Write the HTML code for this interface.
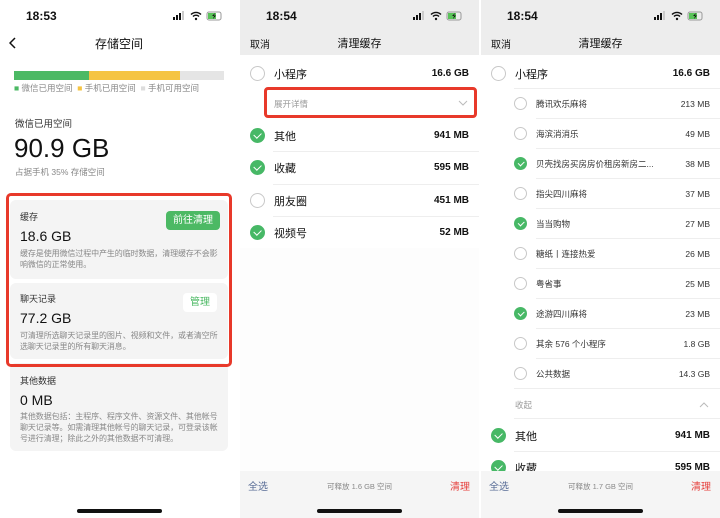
<!DOCTYPE html>
<html><head><meta charset="utf-8"><style>
*{margin:0;padding:0;box-sizing:border-box}
body{width:720px;height:518px;overflow:hidden;background:#fff;font-family:"Liberation Sans","Noto Sans CJK SC",sans-serif;position:relative;color:#111}
.p{position:absolute;top:0;height:518px;overflow:hidden}
.a{position:absolute;white-space:nowrap}
.time{font-size:12px;font-weight:bold;top:9px}
.card{position:absolute;left:10px;width:218px;background:#f4f4f4;border-radius:6px}
.g{color:#888}
.d{font-size:8px;line-height:11px;white-space:normal;width:204px;letter-spacing:-0.1px}
.c{position:absolute;border-radius:50%;border:1px solid #c8c8c8;background:#fff}
.ck{position:absolute;border-radius:50%;background:#47b866}
.ck:after{content:"";position:absolute;left:35%;top:22%;width:25%;height:42%;border:solid #fff;border-width:0 1.5px 1.5px 0;transform:rotate(45deg)}
.ln{position:absolute;height:1px;background:#eee}
.hb{position:absolute;width:85px;height:4px;border-radius:2px;background:#111;top:509px}
.v{font-size:10px;font-weight:bold;right:10px}
.s{font-size:8.5px;color:#333;right:10px}
</style></head><body>

<div class="p" style="left:0;width:238px;background:#fff">
<div class="a time" style="left:26px">18:53</div>
<svg class="a" style="left:173px;top:11px" width="52" height="10"><rect x="0" y="6" width="2" height="3" fill="#111"/><rect x="3" y="4" width="2" height="5" fill="#111"/><rect x="6" y="2" width="2" height="7" fill="#111"/><rect x="9" y="0" width="2" height="9" fill="#ccc"/><path d="M18 3.5a7 7 0 0 1 10 0M20 5.5a4 4 0 0 1 6 0" stroke="#111" stroke-width="1.4" fill="none"/><circle cx="23" cy="8" r="1.2" fill="#111"/><rect x="34" y="1" width="14" height="8" rx="2" fill="none" stroke="#999"/><rect x="35" y="2" width="8" height="6" fill="#5ac35a"/><path d="M42 2l-3 3h2l-1 3 3-3.5h-2z" fill="#111"/></svg>
<svg class="a" style="left:9px;top:37px" width="8" height="12"><path d="M6 1L1 6l5 5" stroke="#111" stroke-width="1.5" fill="none"/></svg>
<div class="a" style="left:0;width:238px;text-align:center;top:35px;font-size:12px">存储空间</div>
<div class="a" style="left:14px;top:71px;width:210px;height:9px;background:#e5e5e5"></div>
<div class="a" style="left:14px;top:71px;width:75px;height:9px;background:#4cb964"></div>
<div class="a" style="left:89px;top:71px;width:91px;height:9px;background:#f5c443"></div>
<div class="a g" style="left:14px;top:82px;font-size:8.5px"><span style="color:#4cb964">■</span> 微信已用空间 &nbsp;<span style="color:#f5c443">■</span> 手机已用空间 &nbsp;<span style="color:#ddd">■</span> 手机可用空间</div>
<div class="a" style="left:15px;top:116px;font-size:9.5px;color:#333">微信已用空间</div>
<div class="a" style="left:14px;top:133px;font-size:26px">90.9 GB</div>
<div class="a g" style="left:15px;top:166px;font-size:8.5px">占据手机 35% 存储空间</div>

<div class="card" style="top:200px;height:79px"></div>
<div class="a" style="left:20px;top:210px;font-size:9px;color:#333">缓存</div>
<div class="a" style="left:166px;top:211px;width:54px;height:19px;border-radius:4px;background:#4cb964;color:#fff;font-size:10px;text-align:center;line-height:19px">前往清理</div>
<div class="a" style="left:20px;top:228px;font-size:14px">18.6 GB</div>
<div class="a g d" style="left:20px;top:248px">缓存是使用微信过程中产生的临时数据，清理缓存不会影响微信的正常使用。</div>

<div class="card" style="top:283px;height:76px"></div>
<div class="a" style="left:20px;top:292px;font-size:9px;color:#333">聊天记录</div>
<div class="a" style="left:183px;top:293px;width:34px;height:19px;border-radius:4px;background:#fff;color:#4cb964;font-size:10px;text-align:center;line-height:19px">管理</div>
<div class="a" style="left:20px;top:310px;font-size:14px">77.2 GB</div>
<div class="a g d" style="left:20px;top:330px">可清理所选聊天记录里的图片、视频和文件，或者清空所选聊天记录里的所有聊天消息。</div>

<div class="card" style="top:363px;height:88px"></div>
<div class="a" style="left:20px;top:374px;font-size:9px;color:#333">其他数据</div>
<div class="a" style="left:20px;top:392px;font-size:14px">0 MB</div>
<div class="a g d" style="left:20px;top:411px">其他数据包括：主程序、程序文件、资源文件、其他帐号聊天记录等。如需清理其他帐号的聊天记录，可登录该帐号进行清理；除此之外的其他数据不可清理。</div>

<div class="a" style="left:6px;top:193px;width:226px;height:174px;border:3px solid #e8392a;border-radius:5px"></div>
<div class="hb" style="left:77px"></div>
</div>

<div class="p" style="left:240px;width:239px;background:#fdfdfd">
<div class="a" style="left:0;top:0;width:239px;height:55px;background:#ededed"></div>
<div class="a time" style="left:26px">18:54</div>
<svg class="a" style="left:173px;top:11px" width="52" height="10"><rect x="0" y="6" width="2" height="3" fill="#111"/><rect x="3" y="4" width="2" height="5" fill="#111"/><rect x="6" y="2" width="2" height="7" fill="#111"/><rect x="9" y="0" width="2" height="9" fill="#ccc"/><path d="M18 3.5a7 7 0 0 1 10 0M20 5.5a4 4 0 0 1 6 0" stroke="#111" stroke-width="1.4" fill="none"/><circle cx="23" cy="8" r="1.2" fill="#111"/><rect x="34" y="1" width="14" height="8" rx="2" fill="none" stroke="#999"/><rect x="35" y="2" width="8" height="6" fill="#5ac35a"/><path d="M42 2l-3 3h2l-1 3 3-3.5h-2z" fill="#111"/></svg>
<div class="a" style="left:10px;top:36px;font-size:10px">取消</div>
<div class="a" style="left:0;width:239px;text-align:center;top:35px;font-size:11px">清理缓存</div>
<div class="a" style="left:0;top:55px;width:239px;height:193px;background:#fff"></div>
<div class="c" style="left:10px;top:66px;width:15px;height:15px"></div>
<div class="a" style="left:34px;top:66px;font-size:11px">小程序</div>
<div class="a v" style="top:68px">16.6 GB</div>
<div class="a g" style="left:34px;top:98px;font-size:8.5px;color:#999">展开详情</div>
<svg class="a" style="left:218px;top:100px" width="10" height="6"><path d="M1 1l4 4 4-4" stroke="#bbb" fill="none"/></svg>
<div class="a" style="left:24px;top:87px;width:213px;height:31px;border:3px solid #e8392a;border-radius:4px"></div>
<div class="ck" style="left:10px;top:128px;width:15px;height:15px"></div>
<div class="a" style="left:34px;top:128px;font-size:11px">其他</div>
<div class="a v" style="top:130px">941 MB</div>
<div class="ln" style="left:33px;right:0;top:151px"></div>
<div class="ck" style="left:10px;top:160px;width:15px;height:15px"></div>
<div class="a" style="left:34px;top:160px;font-size:11px">收藏</div>
<div class="a v" style="top:162px">595 MB</div>
<div class="ln" style="left:33px;right:0;top:184px"></div>
<div class="c" style="left:10px;top:193px;width:15px;height:15px"></div>
<div class="a" style="left:34px;top:193px;font-size:11px">朋友圈</div>
<div class="a v" style="top:195px">451 MB</div>
<div class="ln" style="left:33px;right:0;top:216px"></div>
<div class="ck" style="left:10px;top:225px;width:15px;height:15px"></div>
<div class="a" style="left:34px;top:225px;font-size:11px">视频号</div>
<div class="a v" style="top:227px">52 MB</div>
<div class="a" style="left:0;top:471px;width:239px;height:47px;background:#f5f5f5"></div>
<div class="a" style="left:8px;top:478px;font-size:10px;color:#576b95">全选</div>
<div class="a g" style="left:0;width:239px;text-align:center;top:481px;font-size:7.5px">可释放 1.6 GB 空间</div>
<div class="a" style="right:9px;top:478px;font-size:10px;color:#e64340">清理</div>
<div class="hb" style="left:77px"></div>
</div>

<div class="p" style="left:481px;width:239px;background:#fff">
<div class="a" style="left:0;top:0;width:239px;height:55px;background:#ededed"></div>
<div class="a time" style="left:26px">18:54</div>
<svg class="a" style="left:173px;top:11px" width="52" height="10"><rect x="0" y="6" width="2" height="3" fill="#111"/><rect x="3" y="4" width="2" height="5" fill="#111"/><rect x="6" y="2" width="2" height="7" fill="#111"/><rect x="9" y="0" width="2" height="9" fill="#ccc"/><path d="M18 3.5a7 7 0 0 1 10 0M20 5.5a4 4 0 0 1 6 0" stroke="#111" stroke-width="1.4" fill="none"/><circle cx="23" cy="8" r="1.2" fill="#111"/><rect x="34" y="1" width="14" height="8" rx="2" fill="none" stroke="#999"/><rect x="35" y="2" width="8" height="6" fill="#5ac35a"/><path d="M42 2l-3 3h2l-1 3 3-3.5h-2z" fill="#111"/></svg>
<div class="a" style="left:10px;top:36px;font-size:10px">取消</div>
<div class="a" style="left:0;width:239px;text-align:center;top:35px;font-size:11px">清理缓存</div>
<div class="c" style="left:10px;top:66px;width:15px;height:15px"></div>
<div class="a" style="left:34px;top:66px;font-size:11px">小程序</div>
<div class="a v" style="top:68px">16.6 GB</div>
<div class="ln" style="left:33px;right:0;top:88px"></div>

<div class="c" style="left:33px;top:97px;width:13px;height:13px"></div><div class="a" style="left:55px;top:98px;font-size:8.5px;color:#333">腾讯欢乐麻将</div><div class="a s" style="top:99px">213 MB</div><div class="ln" style="left:55px;right:0;top:118px"></div>
<div class="c" style="left:33px;top:127px;width:13px;height:13px"></div><div class="a" style="left:55px;top:128px;font-size:8.5px;color:#333">海滨消消乐</div><div class="a s" style="top:129px">49 MB</div><div class="ln" style="left:55px;right:0;top:148px"></div>
<div class="ck" style="left:33px;top:157px;width:13px;height:13px"></div><div class="a" style="left:55px;top:158px;font-size:8.5px;color:#333">贝壳找房买房房价租房新房二...</div><div class="a s" style="top:159px">38 MB</div><div class="ln" style="left:55px;right:0;top:178px"></div>
<div class="c" style="left:33px;top:187px;width:13px;height:13px"></div><div class="a" style="left:55px;top:188px;font-size:8.5px;color:#333">指尖四川麻将</div><div class="a s" style="top:189px">37 MB</div><div class="ln" style="left:55px;right:0;top:208px"></div>
<div class="ck" style="left:33px;top:217px;width:13px;height:13px"></div><div class="a" style="left:55px;top:218px;font-size:8.5px;color:#333">当当购物</div><div class="a s" style="top:219px">27 MB</div><div class="ln" style="left:55px;right:0;top:238px"></div>
<div class="c" style="left:33px;top:247px;width:13px;height:13px"></div><div class="a" style="left:55px;top:248px;font-size:8.5px;color:#333">糖纸丨连接热爱</div><div class="a s" style="top:249px">26 MB</div><div class="ln" style="left:55px;right:0;top:268px"></div>
<div class="c" style="left:33px;top:277px;width:13px;height:13px"></div><div class="a" style="left:55px;top:278px;font-size:8.5px;color:#333">粤省事</div><div class="a s" style="top:279px">25 MB</div><div class="ln" style="left:55px;right:0;top:298px"></div>
<div class="ck" style="left:33px;top:307px;width:13px;height:13px"></div><div class="a" style="left:55px;top:308px;font-size:8.5px;color:#333">途游四川麻将</div><div class="a s" style="top:309px">23 MB</div><div class="ln" style="left:55px;right:0;top:328px"></div>
<div class="c" style="left:33px;top:337px;width:13px;height:13px"></div><div class="a" style="left:55px;top:338px;font-size:8.5px;color:#333">其余 576 个小程序</div><div class="a s" style="top:339px">1.8 GB</div><div class="ln" style="left:55px;right:0;top:358px"></div>
<div class="c" style="left:33px;top:367px;width:13px;height:13px"></div><div class="a" style="left:55px;top:368px;font-size:8.5px;color:#333">公共数据</div><div class="a s" style="top:369px">14.3 GB</div><div class="ln" style="left:33px;right:0;top:388px"></div>
<div class="a" style="left:34px;top:399px;font-size:8.5px;color:#999">收起</div>
<svg class="a" style="left:218px;top:402px" width="10" height="6"><path d="M1 5l4-4 4 4" stroke="#bbb" fill="none"/></svg>
<div class="ln" style="left:33px;right:0;top:418px"></div>
<div class="ck" style="left:10px;top:428px;width:15px;height:15px"></div>
<div class="a" style="left:34px;top:428px;font-size:11px">其他</div>
<div class="a v" style="top:430px">941 MB</div>
<div class="ln" style="left:33px;right:0;top:451px"></div>
<div class="ck" style="left:10px;top:460px;width:15px;height:15px"></div>
<div class="a" style="left:34px;top:460px;font-size:11px">收藏</div>
<div class="a v" style="top:462px">595 MB</div>
<div class="a" style="left:0;top:471px;width:239px;height:47px;background:#f5f5f5"></div>
<div class="a" style="left:8px;top:478px;font-size:10px;color:#576b95">全选</div>
<div class="a g" style="left:0;width:239px;text-align:center;top:481px;font-size:7.5px">可释放 1.7 GB 空间</div>
<div class="a" style="right:9px;top:478px;font-size:10px;color:#e64340">清理</div>
<div class="hb" style="left:77px"></div>
</div>
</body></html>
